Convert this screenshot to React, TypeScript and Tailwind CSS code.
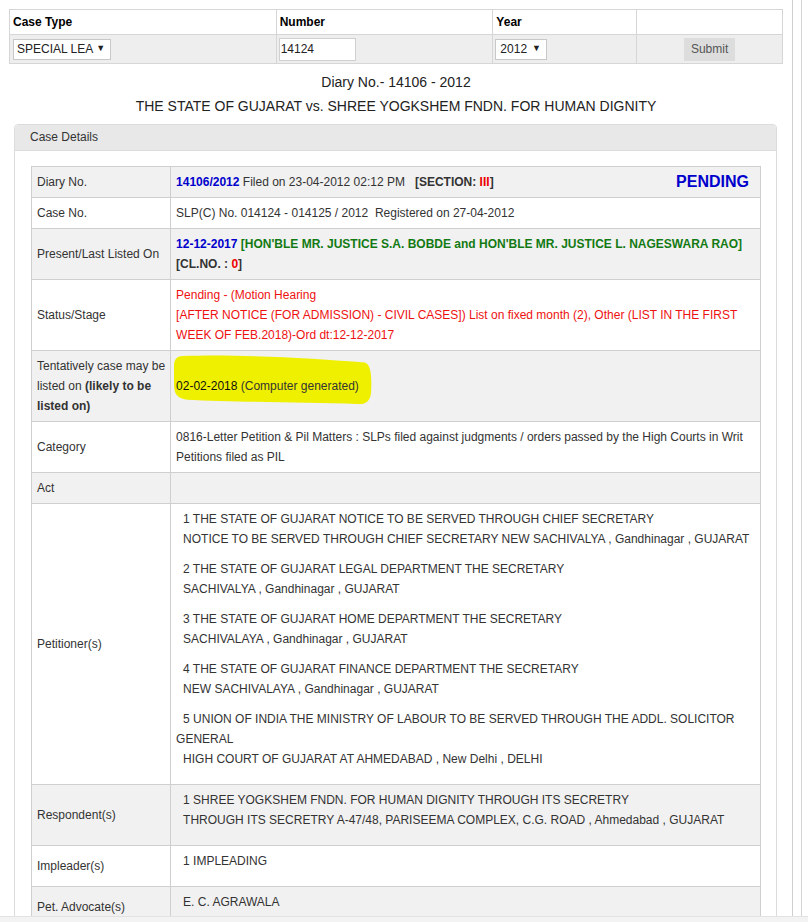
import React from "react";

// Case status lookup page: search form + case details panel

const cellBase = "border border-[#cfcfcf] px-[5px] py-[5px] leading-[20px] align-middle";

function Row({ label, gray, children }: { label: React.ReactNode; gray?: boolean; children?: React.ReactNode }) {
  return (
    <tr className={gray ? "bg-[#f1f1f1]" : "bg-white"}>
      <td className={`${cellBase} whitespace-nowrap text-[#333]`}>{label}</td>
      <td className={`${cellBase} text-[#333]`}>{children}</td>
    </tr>
  );
}

function Party({ first, rest }: { first: React.ReactNode; rest: React.ReactNode }) {
  return (
    <div className="mb-[10px]">
      <div>{first}</div>
      {rest}
    </div>
  );
}

export default function App() {
  return (
    <div className="relative h-[922px] w-[808px] overflow-hidden bg-white font-['Liberation_Sans',Arial,sans-serif] text-[12px] text-[#333]">
      <div className="flex h-full">
        <div className="w-[793px] border-r border-[#cfcfcf] pt-[9px]">
          {/* search form */}
          <table className="ml-[9px] w-[774px] border-collapse">
            <colgroup>
              <col className="w-[267px]" />
              <col className="w-[217px]" />
              <col className="w-[144px]" />
              <col className="w-[146px]" />
            </colgroup>
            <tbody>
              <tr className="h-[25px] bg-white">
                <td className="border border-[#d6d6d6] px-[3px] font-bold text-black">Case Type</td>
                <td className="border border-[#d6d6d6] px-[3px] font-bold text-black">Number</td>
                <td className="border border-[#d6d6d6] px-[3px] font-bold text-black">Year</td>
                <td className="border border-[#d6d6d6] px-[3px]"></td>
              </tr>
              <tr className="h-[29px] bg-[#eeeeee]">
                <td className="border border-[#d6d6d6] px-[3px]">
                  <div className="flex h-[21px] w-[98px] items-center border border-[#c8c8c8] bg-white pl-[3px] text-[12px] text-[#222]">
                    SPECIAL LEA<span className="ml-[3px] text-[9px]">▼</span>
                  </div>
                </td>
                <td className="border border-[#d6d6d6] px-[2px]">
                  <input
                    readOnly
                    value="14124"
                    className="h-[23px] w-[77px] border border-[#d0d0d0] bg-white px-[1px] text-[12px] text-[#222] outline-none"
                  />
                </td>
                <td className="border border-[#d6d6d6] px-[2px]">
                  <div className="flex h-[21px] w-[52px] items-center border border-[#c8c8c8] bg-white pl-[4px] text-[12px] text-[#222]">
                    2012<span className="ml-[5px] text-[9px]">▼</span>
                  </div>
                </td>
                <td className="border border-[#d6d6d6] text-center">
                  <span className="inline-flex h-[23px] w-[51px] items-center justify-center bg-[#dddddd] text-[12px] text-[#555]">
                    Submit
                  </span>
                </td>
              </tr>
            </tbody>
          </table>

          <div className="mt-[8px] text-center text-[14px] leading-[20px] text-[#222]">Diary No.- 14106 - 2012</div>
          <div className="mt-[4px] text-center text-[14px] leading-[20px] text-[#222]">
            THE STATE OF GUJARAT vs. SHREE YOGKSHEM FNDN. FOR HUMAN DIGNITY
          </div>

          {/* case details panel */}
          <div className="ml-[14px] mt-[8px] w-[763px] rounded-t-[4px] border border-[#dcdcdc]">
            <div className="h-[26px] rounded-t-[4px] border-b border-[#dcdcdc] bg-[#e8e8e8] pl-[15px] leading-[25px] text-[#333]">
              Case Details
            </div>
            <div className="px-[16px] pt-[15px]">
              <table className="w-[730px] border-collapse">
                <colgroup>
                  <col className="w-[139px]" />
                  <col />
                </colgroup>
                <tbody>
                  <Row label="Diary No." gray>
                    <span className="float-right mr-[6px] text-[16px] font-bold leading-[20px] text-[#0000cc]">PENDING</span>
                    <span className="font-bold text-[#0000cc]">14106/2012</span> Filed on 23-04-2012 02:12 PM{"\u00a0\u00a0\u00a0"}
                    <span className="font-bold">
                      [SECTION: <span className="text-[#ee0000]">III</span>]
                    </span>
                  </Row>
                  <Row label="Case No.">SLP(C) No. 014124 - 014125 / 2012{"\u00a0\u00a0"}Registered on 27-04-2012</Row>
                  <Row label="Present/Last Listed On" gray>
                    <span className="font-bold text-[#0000cc]">12-12-2017</span>{" "}
                    <span className="font-bold text-[#137a13]">
                      [HON'BLE MR. JUSTICE S.A. BOBDE and HON'BLE MR. JUSTICE L. NAGESWARA RAO]
                    </span>
                    <br />
                    <span className="font-bold">
                      [CL.NO. : <span className="text-[#ee0000]">0</span>]
                    </span>
                  </Row>
                  <Row label="Status/Stage">
                    <span className="text-[#ee1111]">
                      Pending - (Motion Hearing
                      <br />
                      [AFTER NOTICE (FOR ADMISSION) - CIVIL CASES]) List on fixed month (2), Other (LIST IN THE FIRST
                      <br />
                      WEEK OF FEB.2018)-Ord dt:12-12-2017
                    </span>
                  </Row>
                  <Row
                    gray
                    label={
                      <>
                        Tentatively case may be
                        <br />
                        listed on <b>(likely to be</b>
                        <br />
                        <b>listed on)</b>
                      </>
                    }
                  >
                    <span className="relative inline-block">
                      {/* hand-drawn highlighter mark */}
                      <svg
                        className="absolute left-[-3px] top-[-21px] h-[51px] w-[200px]"
                        viewBox="0 0 200 48"
                        preserveAspectRatio="none"
                      >
                        <path
                          d="M10 1 C60 -1, 140 3, 192 7 C198 9, 199 20, 198 36 C197 44, 192 47, 184 46 C130 45, 60 44, 14 42 C4 41, 1 36, 1 28 L1 10 C1 4, 4 1, 10 1 Z"
                          fill="#eff000"
                        />
                      </svg>
                      <span className="relative text-[#111]">
                        02-02-2018 <span className="text-[#333]">(Computer generated)</span>
                      </span>
                    </span>
                  </Row>
                  <Row label="Category">
                    0816-Letter Petition &amp; Pil Matters : SLPs filed against judgments / orders passed by the High Courts in Writ
                    <br />
                    Petitions filed as PIL
                  </Row>
                  <Row label="Act" gray></Row>
                  <Row label="Petitioner(s)">
                    <Party
                      first={<span className="pl-[7px]">1 THE STATE OF GUJARAT NOTICE TO BE SERVED THROUGH CHIEF SECRETARY</span>}
                      rest={<div className="pl-[7px]">NOTICE TO BE SERVED THROUGH CHIEF SECRETARY NEW SACHIVALYA , Gandhinagar , GUJARAT</div>}
                    />
                    <Party
                      first={<span className="pl-[7px]">2 THE STATE OF GUJARAT LEGAL DEPARTMENT THE SECRETARY</span>}
                      rest={<div className="pl-[7px]">SACHIVALYA , Gandhinagar , GUJARAT</div>}
                    />
                    <Party
                      first={<span className="pl-[7px]">3 THE STATE OF GUJARAT HOME DEPARTMENT THE SECRETARY</span>}
                      rest={<div className="pl-[7px]">SACHIVALAYA , Gandhinagar , GUJARAT</div>}
                    />
                    <Party
                      first={<span className="pl-[7px]">4 THE STATE OF GUJARAT FINANCE DEPARTMENT THE SECRETARY</span>}
                      rest={<div className="pl-[7px]">NEW SACHIVALAYA , Gandhinagar , GUJARAT</div>}
                    />
                    <Party
                      first={
                        <>
                          <span className="pl-[7px]">5 UNION OF INDIA THE MINISTRY OF LABOUR TO BE SERVED THROUGH THE ADDL. SOLICITOR</span>
                          <br />
                          GENERAL
                        </>
                      }
                      rest={<div className="pl-[7px]">HIGH COURT OF GUJARAT AT AHMEDABAD , New Delhi , DELHI</div>}
                    />
                  </Row>
                  <Row label="Respondent(s)" gray>
                    <Party
                      first={<span className="pl-[7px]">1 SHREE YOGKSHEM FNDN. FOR HUMAN DIGNITY THROUGH ITS SECRETRY</span>}
                      rest={<div className="pl-[7px]">THROUGH ITS SECRETRY A-47/48, PARISEEMA COMPLEX, C.G. ROAD , Ahmedabad , GUJARAT</div>}
                    />
                  </Row>
                  <Row label="Impleader(s)">
                    <div className="mb-[10px] pl-[7px]">1 IMPLEADING</div>
                  </Row>
                  <Row label="Pet. Advocate(s)" gray>
                    <div className="mb-[10px] pl-[7px]">E. C. AGRAWALA</div>
                  </Row>
                </tbody>
              </table>
            </div>
          </div>
        </div>
        <div className="ml-[8px] h-full w-px bg-[#d4d4d4]" />
      </div>
      {/* bottom window edge */}
      <div className="absolute bottom-0 left-0 h-[6px] w-full border-t border-[#e2e2e2] bg-[#f3f3f3]" />
    </div>
  );
}
